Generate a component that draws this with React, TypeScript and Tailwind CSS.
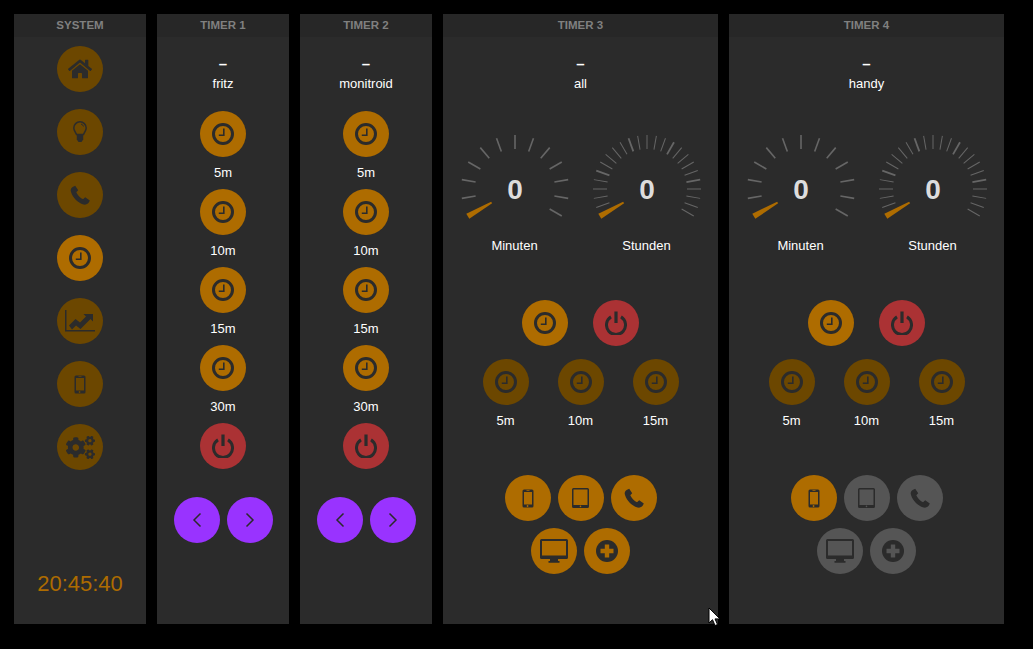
import { FaCogs, FaHome } from 'react-icons/fa'
import type { ReactNode } from 'react'

const ICON = '#2b2b2b'

function ClockIcon() {
  return (
    <svg width="22" height="22" viewBox="0 0 22 22" fill="none" stroke={ICON}>
      <circle cx="11" cy="11" r="9.5" strokeWidth="3" />
      <path d="M6.800 12.200h5V5.500" strokeWidth="1.600" />
    </svg>
  )
}

function PowerIcon() {
  return (
    <svg width="22" height="24" viewBox="0 0 22 24" fill="none" stroke={ICON} strokeWidth="3">
      <path d="M6 5.900a9.500 9.500 0 1 0 10 0" />
      <path d="M11 0.500v11.500" strokeWidth="3.200" />
    </svg>
  )
}

function PhoneIcon() {
  return (
    <svg width="20" height="20" viewBox="0 0 20 20" fill={ICON}>
      <path d="M5.200.800L2.600 2C.800 3 .300 5 1 7c2 6 6.500 10.500 12.500 12.500 2 .500 4-.300 5.300-2l1-2-4.600-3.200-2.200 1.900c-3-1.400-5.500-4.200-6.700-7l1.900-2z" />
    </svg>
  )
}

function BulbIcon() {
  return (
    <svg width="14" height="22" viewBox="0 0 14 22" fill="none" stroke={ICON}>
      <path d="M7 .800A6.200 6.200 0 0 0 .800 7c0 2.600 1.700 3.800 2.700 6.500h7C11.500 10.800 13.200 9.600 13.200 7A6.200 6.200 0 0 0 7 .800z" strokeWidth="1.500" />
      <path d="M8 3a3.500 3.500 0 0 1 2.500 2.500" strokeWidth="1" />
      <path d="M3.800 14h6.400v4.500l-1.700 2.500h-3l-1.700-2.500z" fill={ICON} stroke="none" />
    </svg>
  )
}

function MobileIcon() {
  return (
    <svg width="12" height="19" viewBox="0 0 12 19" fill={ICON}>
      <path
        fillRule="evenodd"
        d="M2 .500h8A1.500 1.500 0 0 1 11.500 2v15a1.500 1.500 0 0 1-1.500 1.500H2A1.500 1.500 0 0 1 .500 17V2A1.500 1.500 0 0 1 2 .500zM2 3v12.500h8V3zM6 16.200a.900.900 0 1 0 0 1.600.900.900 0 0 0 0-1.600zM4.500 1.300v.700h3v-.700z"
      />
    </svg>
  )
}

function TabletIcon() {
  return (
    <svg width="17" height="20" viewBox="0 0 17 20" fill={ICON}>
      <path
        fillRule="evenodd"
        d="M1.500 0h14A1.500 1.500 0 0 1 17 1.500v17a1.500 1.500 0 0 1-1.500 1.500h-14A1.500 1.500 0 0 1 0 18.500v-17A1.500 1.500 0 0 1 1.500 0zM1.500 1.500V17h14V1.500zM8.500 17.600a.800.800 0 1 0 0 1.600.800.800 0 0 0 0-1.600z"
      />
    </svg>
  )
}

function DesktopIcon() {
  return (
    <svg width="28" height="24" viewBox="0 0 28 24" fill={ICON}>
      <path
        fillRule="evenodd"
        d="M1.500 0h25A1.500 1.500 0 0 1 28 1.500v17a1.500 1.500 0 0 1-1.500 1.500h-25A1.500 1.500 0 0 1 0 18.500v-17A1.500 1.500 0 0 1 1.500 0zM2 2v14.500h24V2z"
      />
      <path d="M10 20h8v2h1.500v1.800h-11V22H10z" />
    </svg>
  )
}

function PlusIcon({ cut }: { cut: string }) {
  return (
    <svg width="22" height="22" viewBox="0 0 22 22">
      <circle cx="11" cy="11" r="11" fill={ICON} />
      <path d="M8.800 4.500h4.400v4.300h4.300v4.400h-4.300v4.300H8.800v-4.300H4.500V8.800h4.300z" fill={cut} />
    </svg>
  )
}

function ChartIcon() {
  return (
    <svg width="30" height="22" viewBox="0 0 30 22" fill={ICON}>
      <path d="M0 0h1.500v20H30v1.500H0z" />
      <path d="M4 15.500l6.500-6.500 4.500 3.500 6-6-2.500-2.500H28v7.500l-2.500-2.500-10 10-4.500-3.500-4 4z" />
    </svg>
  )
}

function Chevron({ left }: { left?: boolean }) {
  return (
    <svg width="10" height="16" viewBox="0 0 10 16" fill="none" stroke={ICON} strokeWidth="1.500">
      <path d={left ? 'M8.500 1.500L2 8l6.500 6.500' : 'M1.500 1.500L8 8l-6.500 6.500'} />
    </svg>
  )
}

function Circle({ color, children }: { color: string; children: ReactNode }) {
  return <div className={`flex h-[46px] w-[46px] shrink-0 items-center justify-center rounded-full ${color}`}>{children}</div>
}

const ORANGE = 'bg-[#ae6c00]'
const DIM = 'bg-[#6c4700]'
const RED = 'bg-[#ab3234]'
const PURPLE = 'bg-[#9933ff]'
const GRAY = 'bg-[#555555]'

function Panel({ title, wide, children }: { title: string; wide?: boolean; children: ReactNode }) {
  return (
    <section className={`flex h-[610px] flex-col bg-[#2b2b2b] ${wide ? 'w-[275px]' : 'w-[132px]'}`}>
      <h2 className="h-[23px] bg-[#272727] text-center text-[11.5px] leading-[23px] font-bold text-[#808080]">{title}</h2>
      {children}
    </section>
  )
}

function Name({ name }: { name: string }) {
  return (
    <div className="mt-[17px] flex flex-col items-center text-white">
      <div className="h-[19px] text-[15px] leading-[19px] font-bold">–</div>
      <div className="h-[21px] text-[13px] leading-[21px]">{name}</div>
    </div>
  )
}

function TimerNarrow({ title, name }: { title: string; name: string }) {
  return (
    <Panel title={title}>
      <Name name={name} />
      <div className="mt-[17px] flex flex-col items-center">
        {['5m', '10m', '15m', '30m'].map((m) => (
          <div key={m} className="flex flex-col items-center">
            <Circle color={ORANGE}><ClockIcon /></Circle>
            <div className="h-[32px] text-[13px] leading-[31px] text-white">{m}</div>
          </div>
        ))}
        <Circle color={RED}><PowerIcon /></Circle>
        <div className="mt-[28px] flex gap-[7px]">
          <Circle color={PURPLE}><Chevron left /></Circle>
          <Circle color={PURPLE}><Chevron /></Circle>
        </div>
      </div>
    </Panel>
  )
}

// ticks run from -120deg to 120deg; the hours dial has every fifth one heavier
function Gauge({ ticks, label }: { ticks: number; label: string }) {
  const step = 240 / (ticks - 1)
  const hours = ticks > 13
  return (
    <div className="flex w-[132px] flex-col items-center">
      <svg width="132" height="98" viewBox="0 0 132 98">
        {Array.from({ length: ticks }, (_, i) => (
          <line
            key={i}
            x1="66"
            y1="14"
            x2="66"
            y2="0"
            stroke="#666666"
            strokeWidth={hours ? (i % 5 === 0 ? 1.8 : 1) : 1.6}
            transform={`rotate(${-120 + i * step} 66 54)`}
          />
        ))}
        <polygon points="63,-0.500 69,-0.500 67,27 65,27" fill="#ae6c00" transform="rotate(-120 66 54)" />
        <text x="66" y="64" textAnchor="middle" fontSize="28" fontWeight="700" fill="#dddddd">0</text>
      </svg>
      <div className="mt-[3px] text-[13px] leading-[20px] text-white">{label}</div>
    </div>
  )
}

function TimerWide({ title, name, allOn }: { title: string; name: string; allOn: boolean }) {
  const dev = allOn ? ORANGE : GRAY
  const cut = allOn ? '#ae6c00' : '#555555'
  return (
    <Panel title={title} wide>
      <Name name={name} />
      <div className="mt-[41px] flex justify-center">
        <Gauge ticks={13} label="Minuten" />
        <Gauge ticks={25} label="Stunden" />
      </div>
      <div className="mt-[44px] flex justify-center gap-[25px]">
        <Circle color={ORANGE}><ClockIcon /></Circle>
        <Circle color={RED}><PowerIcon /></Circle>
      </div>
      <div className="mt-[13px] flex justify-center gap-[29px]">
        {['5m', '10m', '15m'].map((m) => (
          <div key={m} className="flex flex-col items-center">
            <Circle color={DIM}><ClockIcon /></Circle>
            <div className="h-[32px] text-[13px] leading-[32px] text-white">{m}</div>
          </div>
        ))}
      </div>
      <div className="mt-[38px] flex flex-col items-center gap-[7px]">
        <div className="flex gap-[7px]">
          <Circle color={ORANGE}><MobileIcon /></Circle>
          <Circle color={dev}><TabletIcon /></Circle>
          <Circle color={dev}><PhoneIcon /></Circle>
        </div>
        <div className="flex gap-[7px]">
          <Circle color={dev}><DesktopIcon /></Circle>
          <Circle color={dev}><PlusIcon cut={cut} /></Circle>
        </div>
      </div>
    </Panel>
  )
}

export default function App() {
  return (
    <div className="relative flex h-[649px] w-[1033px] gap-[11px] overflow-hidden bg-black pt-[14px] pl-[14px] font-['Liberation_Sans',Arial,sans-serif]">
      <Panel title="SYSTEM">
        <div className="mt-[9px] flex flex-col items-center gap-[17px]">
          <Circle color={DIM}><FaHome size={24} color={ICON} /></Circle>
          <Circle color={DIM}><BulbIcon /></Circle>
          <Circle color={DIM}><PhoneIcon /></Circle>
          <Circle color={ORANGE}><ClockIcon /></Circle>
          <Circle color={DIM}><ChartIcon /></Circle>
          <Circle color={DIM}><MobileIcon /></Circle>
          <Circle color={DIM}><FaCogs size={29} color={ICON} /></Circle>
        </div>
        <div className="mt-auto mb-[27px] text-center text-[22px] leading-[26px] text-[#ae6c00]">20:45:40</div>
      </Panel>
      <TimerNarrow title="TIMER 1" name="fritz" />
      <TimerNarrow title="TIMER 2" name="monitroid" />
      <TimerWide title="TIMER 3" name="all" allOn />
      <TimerWide title="TIMER 4" name="handy" allOn={false} />
      {/* mouse pointer caught in the shot */}
      <svg className="absolute top-[607px] left-[708px]" width="14" height="20" viewBox="0 0 14 20">
        <path d="M1 1v15l3.500-3.300 2.500 5.800 2.500-1-2.500-5.600H12z" fill="#fff" stroke="#000" strokeWidth="1" />
      </svg>
    </div>
  )
}
